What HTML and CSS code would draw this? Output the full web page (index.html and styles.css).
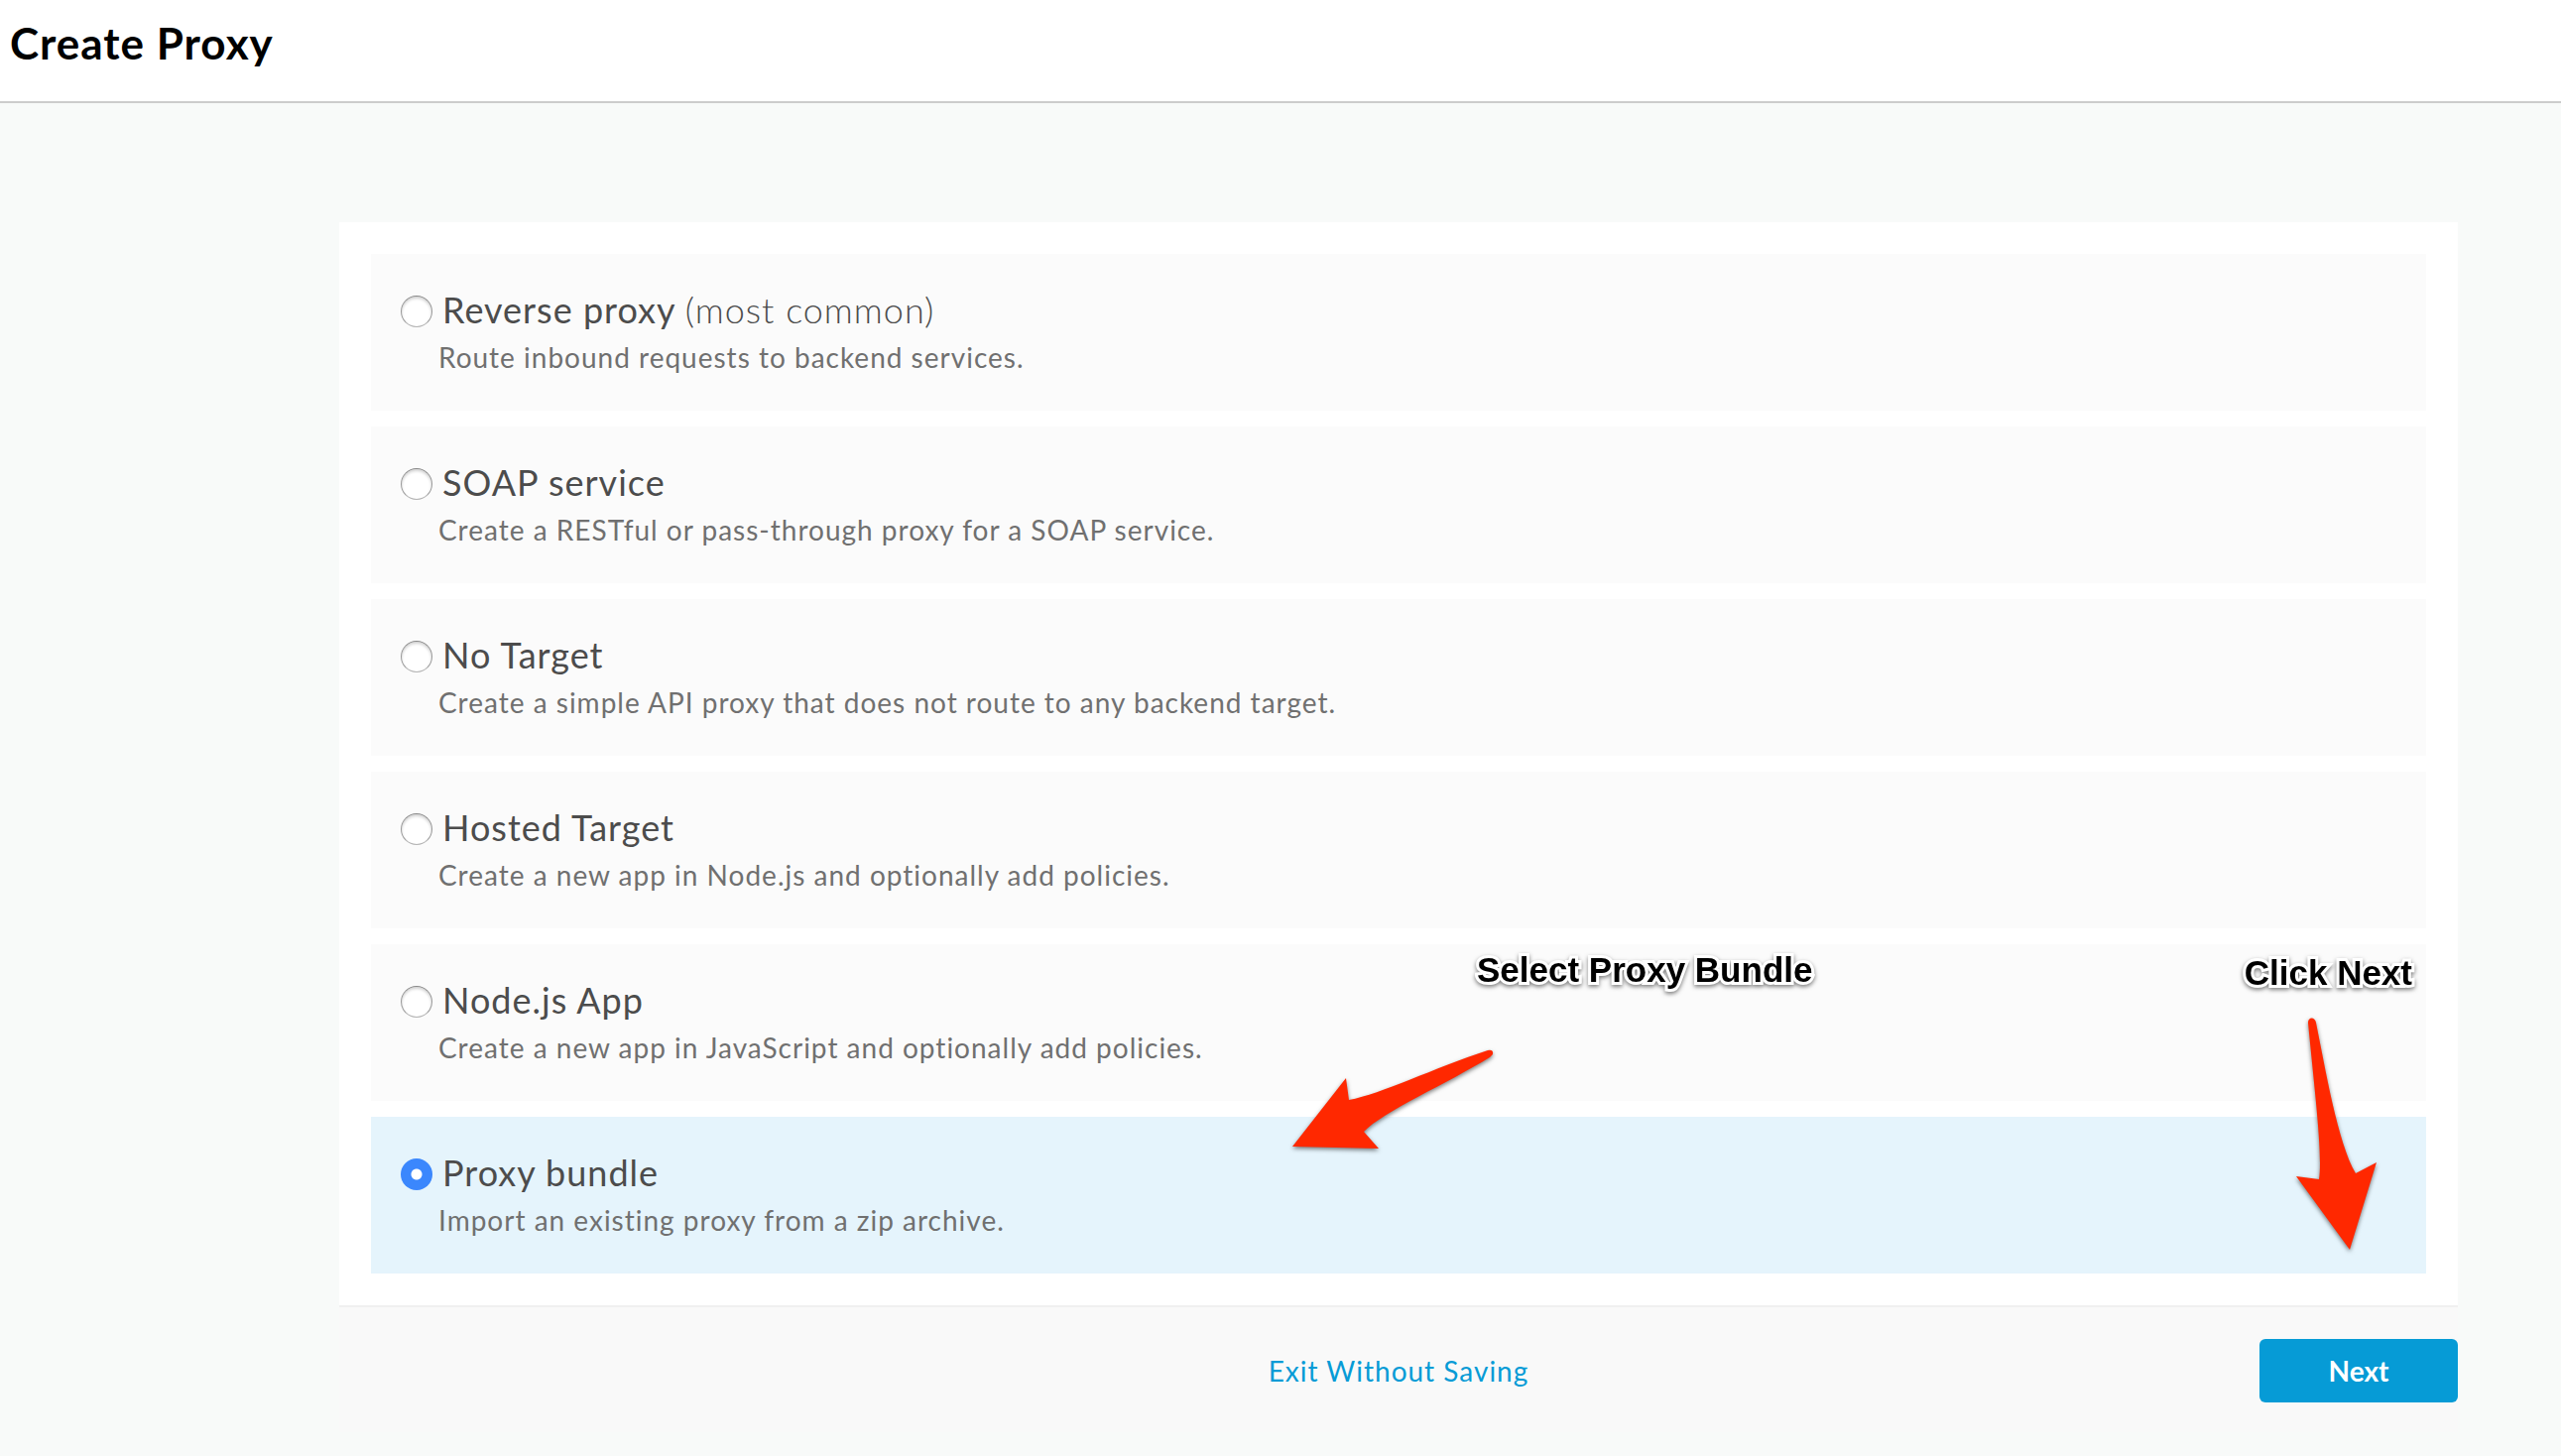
FILE: index.html
```html
<!DOCTYPE html>
<html lang="en">
<head>
<meta charset="utf-8">
<meta name="viewport" content="width=device-width, initial-scale=1">
<title>Create Proxy</title>
<link rel="stylesheet" href="styles.css">
</head>
<body>
<header class="page-header">
  <h1 class="page-title">Create Proxy</h1>
</header>
<main class="page-main">
  <form class="wizard">
    <div class="options" role="radiogroup" aria-label="Proxy type">
      <label class="option">
        <span class="option-head"><input class="radio" type="radio" name="type"><span class="option-title">Reverse proxy <span class="light">(most common)</span></span></span>
        <span class="option-desc">Route inbound requests to backend services.</span>
      </label>
      <label class="option">
        <span class="option-head"><input class="radio" type="radio" name="type"><span class="option-title">SOAP service</span></span>
        <span class="option-desc">Create a RESTful or pass-through proxy for a SOAP service.</span>
      </label>
      <label class="option">
        <span class="option-head"><input class="radio" type="radio" name="type"><span class="option-title">No Target</span></span>
        <span class="option-desc">Create a simple API proxy that does not route to any backend target.</span>
      </label>
      <label class="option">
        <span class="option-head"><input class="radio" type="radio" name="type"><span class="option-title">Hosted Target</span></span>
        <span class="option-desc">Create a new app in Node.js and optionally add policies.</span>
      </label>
      <label class="option">
        <span class="option-head"><input class="radio" type="radio" name="type"><span class="option-title">Node.js App</span></span>
        <span class="option-desc">Create a new app in JavaScript and optionally add policies.</span>
      </label>
      <label class="option option-selected">
        <span class="option-head"><input class="radio" type="radio" name="type" checked><span class="option-title">Proxy bundle</span></span>
        <span class="option-desc">Import an existing proxy from a zip archive.</span>
      </label>
    </div>
    <div class="actions">
      <a class="exit" href="#">Exit Without Saving</a>
      <button class="next" type="button">Next</button>
    </div>
    <p class="note note-select">Select Proxy Bundle</p>
    <svg class="arrow arrow-select" viewBox="0 0 210 110" aria-hidden="true">
      <path d="M3 101 L57 32 L60 54 C93 48 145 22 200 4 Q206 3 205 8 L202 11 C160 37 94 66 75 86 L90 103 Z"/>
    </svg>
    <p class="note note-next">Click Next</p>
    <svg class="arrow arrow-next" viewBox="0 0 90 245" aria-hidden="true">
      <path d="M17 11 C17 5 24 5 25 11 C34 55 47 133 65 163 L86 152 L59 240 L5 166 L28 169 C32 145 23 75 17 11 Z"/>
    </svg>
  </form>
</main>
</body>
</html>
```
FILE: styles.css
```css
* { box-sizing: border-box; }

body {
  margin: 0;
  min-height: 100vh;
  background: #f8faf9;
  color: #4c4c4c;
  font-family: Lato, "Liberation Sans", sans-serif;
  letter-spacing: 1px;
}

.page-header {
  padding: 15px 10px 31px;
  background: #fff;
  border-bottom: 2px solid #ccc;
}

.page-title {
  margin: 0;
  color: #000;
  font-size: 44px;
  line-height: 56px;
  font-weight: 700;
}

.page-main { padding: 120px 104px 24px 342px; }

.wizard { position: relative; }

.options {
  display: flex;
  flex-direction: column;
  gap: 16px;
  padding: 32px;
  background: #fff;
  border-bottom: 2px solid #f0f0f0;
}

.option {
  display: block;
  padding: 32px 30px 30px;
  background: #fbfbfb;
}

.option-selected { background: #e5f4fc; }

.option-head {
  display: flex;
  align-items: flex-start;
  gap: 10px;
}

.option-title {
  font-size: 36px;
  line-height: 48px;
}

.light { font-weight: 300; }

.option-desc {
  display: block;
  padding-left: 38px;
  color: #707070;
  font-size: 28px;
  line-height: 48px;
}

.radio {
  appearance: none;
  flex: none;
  width: 32px;
  height: 32px;
  margin: 10px 0 0;
  border: 1px solid #9a9a9a;
  border-top-color: #888;
  border-bottom-color: #b4b4b4;
  border-radius: 50%;
  background: #fff;
  box-shadow: inset 0 2px 3px rgba(0, 0, 0, 0.18);
}

.radio:checked {
  border: 0;
  background: radial-gradient(circle, #fff 5px, #3b87fd 6px);
  box-shadow: none;
}

.actions {
  display: grid;
  grid-template-columns: 1fr auto 1fr;
  align-items: center;
  padding: 32px 0 30px;
  background: #f9f9f9;
}

.exit {
  grid-column: 2;
  color: #069bd6;
  font-size: 28px;
  line-height: 36px;
  text-decoration: none;
}

.next {
  justify-self: end;
  width: 200px;
  height: 64px;
  padding: 0;
  border: 0;
  border-radius: 6px;
  background: #069bd6;
  color: #fff;
  font: 700 28px/36px Lato, "Liberation Sans", sans-serif;
}

.note {
  position: absolute;
  margin: 0;
  color: #000;
  font: 700 35px/40px "Liberation Sans", sans-serif;
  letter-spacing: normal;
  white-space: nowrap;
  -webkit-text-stroke: 6px #fff;
  paint-order: stroke fill;
  filter: drop-shadow(0 2px 2px rgba(0, 0, 0, 0.5));
}

.note-select { left: 1147px; top: 734px; }
.note-next { right: 46px; top: 737px; }

.arrow {
  position: absolute;
  fill: #ff2800;
  filter: drop-shadow(0 2px 2px rgba(0, 0, 0, 0.5));
  pointer-events: none;
}

.arrow-select { left: 958px; top: 831px; width: 210px; height: 110px; }
.arrow-next { right: 78px; top: 796px; width: 90px; height: 245px; }
```
